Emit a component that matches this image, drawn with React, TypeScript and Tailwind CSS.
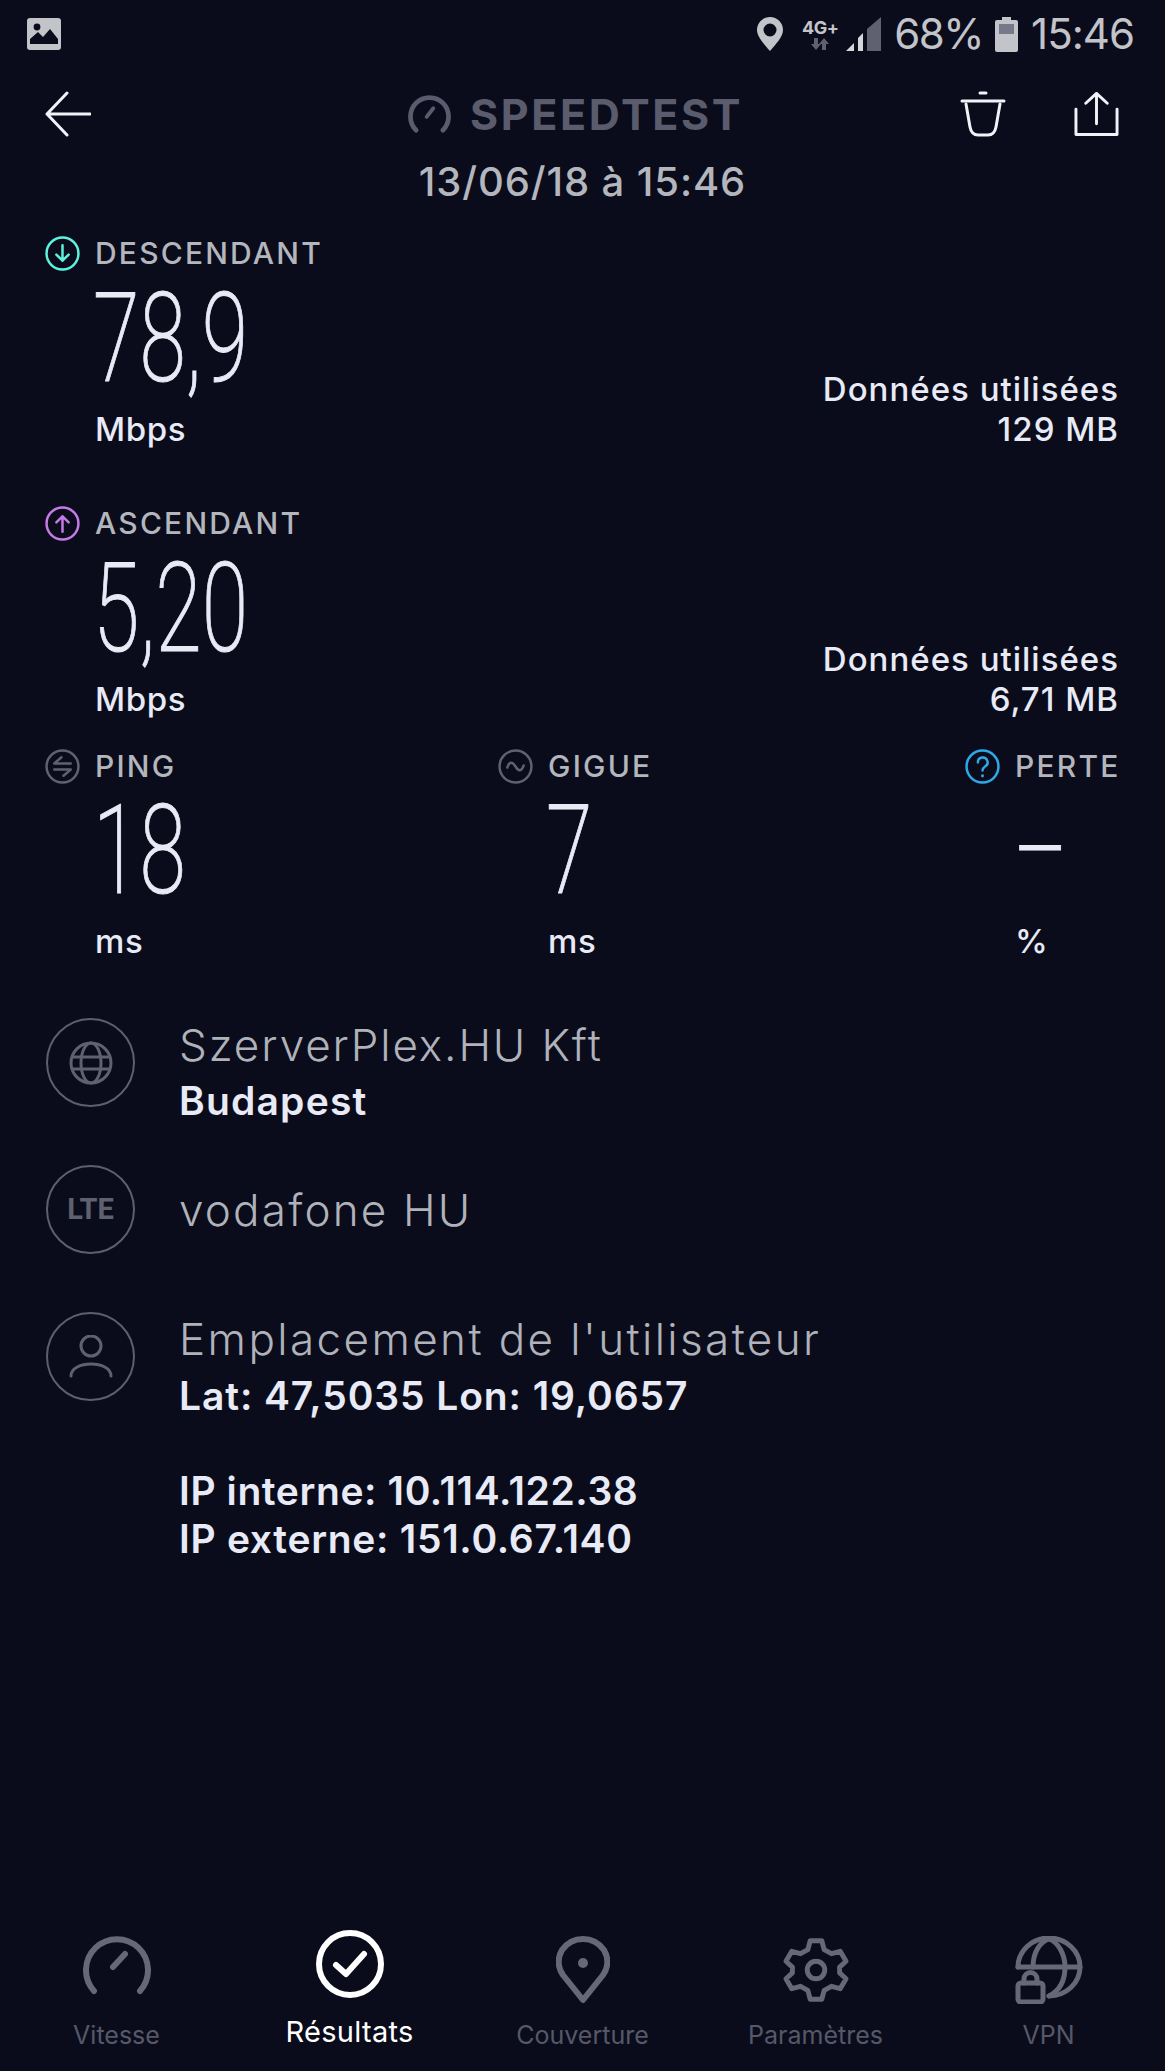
import { ReactNode } from 'react'

const sans = 'font-["Inter","Noto_Sans",sans-serif]'

function BigValue({ children }: { children: ReactNode }) {
  return (
    <div className="h-full flex items-center pb-[5px]">
      <span className='inline-block origin-left scale-x-[0.68] -ml-[2px] font-["Roboto",sans-serif] font-extralight [-webkit-text-stroke:1px_#e8eaf6] text-[124px] leading-none text-[#e8eaf6] whitespace-nowrap'>
        {children}
      </span>
    </div>
  )
}

function RoundIcon({ color, children }: { color: string; children: ReactNode }) {
  return (
    <svg viewBox="0 0 34 34" className="w-[35px] h-[35px] shrink-0" fill="none" stroke={color} strokeWidth="2.4" strokeLinecap="round" strokeLinejoin="round">
      <circle cx="17" cy="17" r="15.5" />
      {children}
    </svg>
  )
}

function Label({ icon, text }: { icon: ReactNode; text: string }) {
  return (
    <div className="flex items-center h-[40px] gap-[15px]">
      {icon}
      <span className="text-[30px] font-medium text-[#b4b6bd] tracking-[2.2px] leading-none">{text}</span>
    </div>
  )
}

function Transfer({ icon, label, value, used }: { icon: ReactNode; label: string; value: string; used: string }) {
  return (
    <div className="flex justify-between items-end pl-[45px] pr-[46px]">
      <div>
        <Label icon={icon} text={label} />
        <div className="h-[136px] pl-[50px]">
          <BigValue>{value}</BigValue>
        </div>
        <div className="h-[40px] pl-[50px] text-[33px] leading-[40px] font-medium text-[#e8eaf6] tracking-[0.6px]">Mbps</div>
      </div>
      <div className="text-right text-[33px] leading-[40px] font-medium text-[#e8eaf6] tracking-[1px]">
        <div>Données utilisées</div>
        <div>{used}</div>
      </div>
    </div>
  )
}

function Stat({ width, icon, label, value, unit }: { width: string; icon: ReactNode; label: string; value: string; unit: string }) {
  return (
    <div className={width}>
      <Label icon={icon} text={label} />
      <div className="h-[135px] pl-[50px]">
        <BigValue>{value}</BigValue>
      </div>
      <div className="h-[40px] pl-[50px] text-[33px] leading-[40px] font-medium text-[#e8eaf6] tracking-[0.6px]">{unit}</div>
    </div>
  )
}

function Circle({ children }: { children: ReactNode }) {
  return (
    <div className="w-[89px] h-[89px] shrink-0 rounded-full border-2 border-[#5d5f70] flex items-center justify-center">
      {children}
    </div>
  )
}

function NavItem({ label, active, icon }: { label: string; active?: boolean; icon: ReactNode }) {
  return (
    <div className="flex flex-col items-center">
      <div className="h-[76px] flex items-start">{icon}</div>
      <div className={active ? 'text-[29px] leading-[34px] mt-[9px] text-white tracking-[0.3px]' : 'text-[25px] leading-[34px] mt-[12px] text-[#565869]'}>{label}</div>
    </div>
  )
}

export default function App() {
  return (
    <div className={`${sans} w-[1165px] h-[2071px] bg-[#0a0c1b] flex flex-col overflow-hidden`}>
      {/* status bar */}
      <div className="h-[68px] flex items-center pl-[27px] pr-[31px] text-[#c3c4c9]">
        <svg viewBox="0 0 34 32" className="w-[34px] h-[32px]">
          <rect width="34" height="32" rx="3" fill="#c3c4c9" />
          <circle cx="10" cy="9" r="3.4" fill="#0a0c1b" />
          <path d="M3 26 L3 21 L11 14 L16 19 L23 11 L31 21 L31 26 Z" fill="#0a0c1b" />
        </svg>
        <div className="ml-auto flex items-center">
          <svg viewBox="0 0 26 34" className="w-[26px] h-[34px]">
            <path fillRule="evenodd" d="M13 0 C5.8 0 0 5.6 0 13 C0 20 8 28 13 34 C18 28 26 20 26 13 C26 5.6 20.2 0 13 0 Z M13 6.500 A6.500 6.500 0 1 1 13 19.500 A6.500 6.500 0 1 1 13 6.500 Z" fill="#c3c4c9" />
          </svg>
          <div className="ml-[19px] w-[36px] flex flex-col items-center leading-none">
            <span className="text-[18px] font-bold text-[#c3c4c9] tracking-[-0.5px]">4G+</span>
            <svg viewBox="0 0 20 12" className="w-[20px] h-[12px] mt-[1px]" fill="#5f6170">
              <path d="M4 0 H8 V6 H11 L6 12 L1 6 H4 Z" />
              <path d="M12 12 H16 V6 H19 L14 0 L9 6 H12 Z" />
            </svg>
          </div>
          <svg viewBox="0 0 35 34" className="ml-[8px] w-[35px] h-[34px]">
            <path d="M21 34 V12 L35 0 V34 Z" fill="#5f6170" />
            <path d="M12 34 V21 L17 16 V34 Z" fill="#d5d6da" />
            <path d="M0 34 L8 26 V34 Z" fill="#d5d6da" />
          </svg>
          <span className="ml-[13px] text-[42px] leading-none tracking-[-1.5px]">68%</span>
          <svg viewBox="0 0 23 35" className="ml-[12px] w-[23px] h-[35px]">
            <rect x="7" width="9" height="4" fill="#c3c4c9" />
            <rect y="3" width="23" height="32" rx="2" fill="#c3c4c9" />
            <rect x="4" y="7" width="15" height="10" fill="#77798a" />
          </svg>
          <span className="ml-[13px] text-[42px] leading-none tracking-[-1px]">15:46</span>
        </div>
      </div>

      {/* header */}
      <div className="h-[92px] flex items-center pl-[45px] pr-[46px]">
        <svg viewBox="0 0 46 46" className="w-[46px] h-[46px]" fill="none" stroke="#f2f3f8" strokeWidth="3" strokeLinecap="round" strokeLinejoin="round">
          <path d="M22 2 L2 23 L22 44 M2 23 H45" />
        </svg>
        <div className="ml-[316px] flex items-center">
          <svg viewBox="0 0 46 42" className="w-[45px] h-[40px]" fill="none" stroke="#5a5c6e" strokeWidth="5" strokeLinecap="round">
            <path d="M9 38 A20 20 0 1 1 37 38" />
            <path d="M20 24 L27 15" strokeWidth="4" />
          </svg>
          <span className="ml-[18px] text-[43px] leading-none font-bold text-[#5a5c6e] tracking-[2.6px]">SPEEDTEST</span>
        </div>
        <svg viewBox="0 0 46 46" className="ml-auto w-[46px] h-[46px]" fill="none" stroke="#f2f3f8" strokeWidth="3" strokeLinecap="round" strokeLinejoin="round">
          <path d="M2 10 H44 M20 2 H26" />
          <path d="M6 13 L10 36 Q11.500 44 18 44 H28 Q34.500 44 36 36 L40 13" />
        </svg>
        <svg viewBox="0 0 46 46" className="ml-[68px] w-[45px] h-[46px]" fill="none" stroke="#f2f3f8" strokeWidth="3" strokeLinecap="round" strokeLinejoin="round">
          <path d="M2 18 V44 H44 V18" />
          <path d="M23 33 V2 M12 12 L23 2 L34 12" />
        </svg>
      </div>

      <div className="h-[44px] flex items-center justify-center text-[40px] leading-none font-medium text-[#b4b6bd] tracking-[0.9px]">
        13/06/18 à 15:46
      </div>

      <div className="mt-[29px]">
        <Transfer
          label="DESCENDANT"
          value="78,9"
          used="129 MB"
          icon={
            <RoundIcon color="#5ef2dc">
              <path d="M17 9 V24 M11 18 L17 24 L23 18" stroke="#5ef2dc" />
            </RoundIcon>
          }
        />
      </div>
      <div className="mt-[54px]">
        <Transfer
          label="ASCENDANT"
          value="5,20"
          used="6,71 MB"
          icon={
            <RoundIcon color="#c67ae8">
              <path d="M17 25 V10 M11 16 L17 10 L23 16" />
            </RoundIcon>
          }
        />
      </div>

      <div className="mt-[27px] flex pl-[45px]">
        <Stat
          width="w-[453px]"
          label="PING"
          value="18"
          unit="ms"
          icon={
            <RoundIcon color="#5f6170">
              <path d="M25 14 H9 L16 8 M9 20 H25 L18 26" />
            </RoundIcon>
          }
        />
        <Stat
          width="w-[467px]"
          label="GIGUE"
          value="7"
          unit="ms"
          icon={
            <RoundIcon color="#5f6170">
              <path d="M9 18 C11 12 14 12 17 17 C20 22 23 22 25 16" />
            </RoundIcon>
          }
        />
        <Stat
          width="w-[160px]"
          label="PERTE"
          value="–"
          unit="%"
          icon={
            <RoundIcon color="#2ea8e8">
              <path d="M12.500 13 A4.700 4.700 0 1 1 19.500 17 C18 18 17 19 17 21" />
              <path d="M17 26 V26.200" strokeWidth="2.800" />
            </RoundIcon>
          }
        />
      </div>

      {/* server and connection */}
      <div className="mt-[57px] pl-[46px] flex items-start gap-[44px]">
        <Circle>
          <svg viewBox="0 0 44 44" className="w-[44px] h-[44px]" fill="none" stroke="#5f6170" strokeWidth="3">
            <circle cx="22" cy="22" r="20" />
            <ellipse cx="22" cy="22" rx="10" ry="20" />
            <path d="M2 16 H42 M2 28 H42" />
          </svg>
        </Circle>
        <div>
          <div className="text-[44px] leading-[54px] text-[#b0b2ba] tracking-[1.9px] font-light">SzerverPlex.HU Kft</div>
          <div className="text-[39px] leading-[46px] mt-[6px] font-semibold text-[#e8eaf6] tracking-[1.2px]">Budapest</div>
        </div>
      </div>
      <div className="mt-[41px] pl-[46px] flex items-center gap-[44px]">
        <Circle>
          <span className='font-["Roboto",sans-serif] font-bold text-[29px] leading-none text-[#5f6170]'>LTE</span>
        </Circle>
        <div className="text-[44px] leading-[54px] text-[#b0b2ba] tracking-[2.2px] font-light">vodafone HU</div>
      </div>
      <div className="mt-[58px] pl-[46px] flex items-start gap-[44px]">
        <Circle>
          <svg viewBox="0 0 44 44" className="w-[44px] h-[44px]" fill="none" stroke="#5f6170" strokeWidth="3" strokeLinecap="round">
            <circle cx="22" cy="11" r="10" />
            <path d="M2 41 C2 33 12 29 22 29 C32 29 42 33 42 41" />
          </svg>
        </Circle>
        <div>
          <div className="text-[44px] leading-[54px] text-[#b0b2ba] tracking-[2.4px] font-light">Emplacement de l'utilisateur</div>
          <div className="text-[39px] leading-[46px] mt-[7px] font-semibold text-[#e8eaf6] tracking-[0.9px]">Lat: 47,5035 Lon: 19,0657</div>
          <div className="text-[39px] leading-[48px] mt-[48px] font-semibold text-[#e8eaf6] tracking-[0.6px]">IP interne: 10.114.122.38</div>
          <div className="text-[39px] leading-[48px] font-semibold text-[#e8eaf6] tracking-[0.7px]">IP externe: 151.0.67.140</div>
        </div>
      </div>

      {/* bottom nav */}
      <div className="mt-auto h-[141px] grid grid-cols-5">
        <NavItem
          label="Vitesse"
          icon={
            <svg viewBox="0 0 68 68" className="w-[68px] h-[68px] mt-[6px]" fill="none" stroke="#666878" strokeWidth="6" strokeLinecap="round">
              <path d="M11 55 A31 31 0 1 1 57 55" />
              <path d="M30 31 L42 18" />
            </svg>
          }
        />
        <NavItem
          active
          label="Résultats"
          icon={
            <svg viewBox="0 0 68 68" className="w-[68px] h-[68px]" fill="none" stroke="#ffffff" strokeLinecap="round" strokeLinejoin="round">
              <circle cx="34" cy="34" r="31" strokeWidth="6" />
              <path d="M20 35 L30 44 L48 24" strokeWidth="6" />
            </svg>
          }
        />
        <NavItem
          label="Couverture"
          icon={
            <svg viewBox="0 0 54 68" className="w-[54px] h-[68px] mt-[6px]" fill="none" stroke="#666878" strokeWidth="6" strokeLinejoin="round">
              <path d="M27 64 L7 39 C1 30 2 21 6 14 C11 7 19 3 27 3 C35 3 43 7 48 14 C52 21 53 30 47 39 Z" />
              <circle cx="27" cy="27" r="5" fill="#666878" stroke="none" />
            </svg>
          }
        />
        <NavItem
          label="Paramètres"
          icon={
            <svg viewBox="0 0 24 24" className="w-[70px] h-[70px] mt-[5px]" fill="none" stroke="#666878" strokeWidth="1.700" strokeLinecap="round" strokeLinejoin="round">
              <path d="M10 2 H14 L14.800 5 L17.300 6.400 L20.300 5.600 L22.300 9 L20.100 11 V13 L22.300 15 L20.300 18.400 L17.300 17.600 L14.800 19 L14 22 H10 L9.200 19 L6.700 17.600 L3.700 18.400 L1.700 15 L3.900 13 V11 L1.700 9 L3.700 5.600 L6.700 6.400 L9.200 5 Z" />
              <circle cx="12" cy="12" r="3" />
            </svg>
          }
        />
        <NavItem
          label="VPN"
          icon={
            <svg viewBox="0 0 68 68" className="w-[68px] h-[68px] mt-[6px]" fill="none" stroke="#666878" strokeWidth="5" strokeLinecap="round" strokeLinejoin="round">
              <path d="M3 31 A31 29 0 1 1 34 60" />
              <path d="M3 31 H65" />
              <path d="M18 31 C18 16 25 6 34 3 C43 6 50 18 50 31 C50 45 44 55 34 60" />
              <rect x="3" y="47" width="25" height="19" rx="3" />
              <path d="M9 47 V43 A6 6 0 0 1 22 43 V47" />
            </svg>
          }
        />
      </div>
    </div>
  )
}
